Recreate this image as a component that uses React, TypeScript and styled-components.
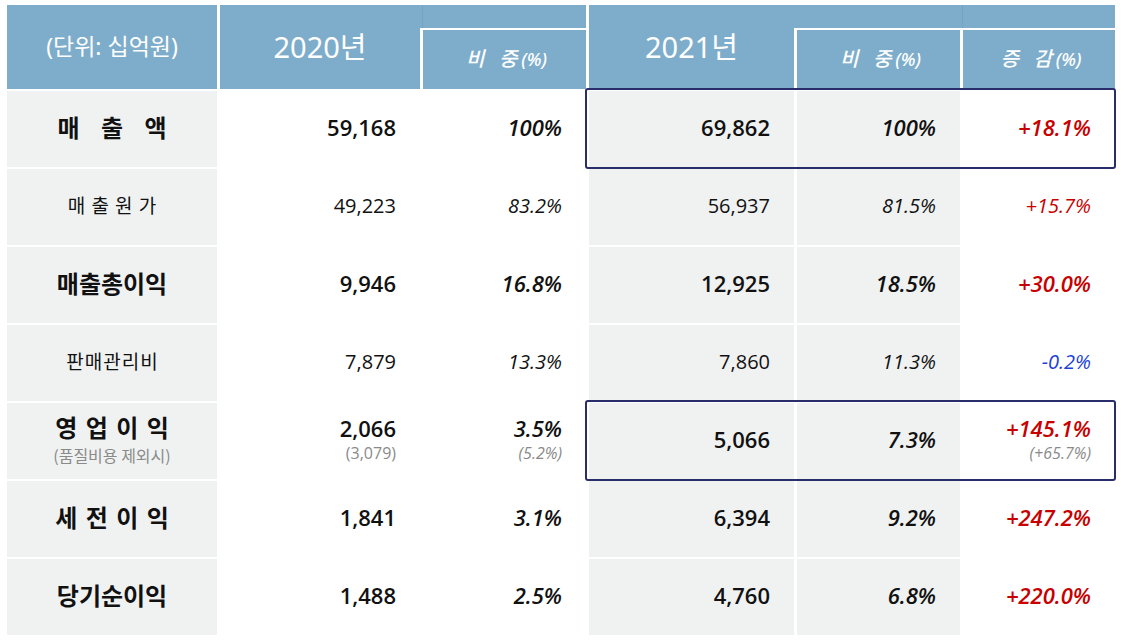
import React from 'react';
import styled, { createGlobalStyle } from 'styled-components';

const Global = createGlobalStyle`
  html, body { margin: 0; padding: 0; background: #ffffff; }
  body { font-family: "Open Sans", "Noto Sans CJK KR", sans-serif; color: #111; }
`;

const Page = styled.div`
  width: 1124px;
  height: 642px;
  padding: 5px 0 0 7px;
  box-sizing: border-box;
  background: #ffffff;
`;

const Table = styled.div`
  display: grid;
  grid-template-columns: 210px 200px 163px 205px 163px 152px;
  grid-template-rows: 23px 59px repeat(7, 76px);
  column-gap: 3px;
  row-gap: 2px;
`;

const BLUE = '#7EADCB';
const GRAY = '#F0F2F1';

const TopStrip = styled.div<{ $col: string; $split: number }>`
  grid-column: ${(p) => p.$col};
  grid-row: 1;
  background:
    linear-gradient(to right, transparent ${(p) => p.$split}px, #73a3c3 ${(p) => p.$split}px, #73a3c3 ${(p) => p.$split + 1}px, transparent ${(p) => p.$split + 1}px),
    ${BLUE};
`;

const HeadCell = styled.div<{ $col: number; $span?: boolean; $size: number }>`
  grid-column: ${(p) => p.$col};
  grid-row: ${(p) => (p.$span ? '1 / 3' : '2')};
  background: ${BLUE};
  color: #ffffff;
  display: flex;
  align-items: center;
  justify-content: center;
  font-family: "Noto Sans", "Noto Sans CJK KR", sans-serif;
  font-size: ${(p) => p.$size}px;
  font-weight: 400;
  padding-bottom: ${(p) => (p.$span ? 5 : 4)}px;
  box-sizing: border-box;
`;

const SubHead = styled.span`
  font-style: italic;
  font-family: "Noto Sans CJK KR", sans-serif;
  font-size: 20px;
  word-spacing: 10px;
  font-weight: 500;
  padding-left: 4px;
`;

const Pct = styled.span`
  font-family: "Noto Sans", sans-serif;
  font-style: italic;
  font-size: 18px;
  font-weight: 500;
  margin-left: 4px;
  word-spacing: 0;
`;

const LabelCell = styled.div<{ $row: number }>`
  grid-column: 1;
  grid-row: ${(p) => p.$row};
  background: ${GRAY};
  display: flex;
  flex-direction: column;
  align-items: center;
  justify-content: center;
  padding-bottom: 3px;
  font-family: "Noto Sans CJK KR", sans-serif;
`;

const LabelText = styled.span<{ $size: number; $weight: number; $ls: number }>`
  font-size: ${(p) => p.$size}px;
  font-weight: ${(p) => p.$weight};
  letter-spacing: ${(p) => p.$ls}px;
  padding-left: ${(p) => p.$ls}px;
  line-height: 1.1;
  color: #111;
`;

const LabelSub = styled.span`
  font-size: 16px;
  color: #8a8a8a;
  line-height: 1.2;
  margin-top: 5px;
  font-weight: 400;
`;

const ValueCell = styled.div<{ $row: number; $col: number; $shade: boolean }>`
  grid-column: ${(p) => p.$col};
  grid-row: ${(p) => p.$row};
  background: ${(p) => (p.$shade ? GRAY : '#ffffff')};
  display: flex;
  flex-direction: column;
  align-items: flex-end;
  justify-content: center;
  padding-right: 24px;
  padding-bottom: 3px;
`;

const Num = styled.span<{ $strong: boolean; $italic?: boolean; $color?: string }>`
  font-family: "Open Sans", sans-serif;
  font-size: ${(p) => (p.$strong ? 22 : 20)}px;
  font-weight: ${(p) => (p.$strong ? 600 : 400)};
  font-style: ${(p) => (p.$italic ? 'italic' : 'normal')};
  color: ${(p) => p.$color || '#111'};
  line-height: 1.1;
`;

const NumSub = styled.span<{ $italic?: boolean }>`
  font-family: "Open Sans", sans-serif;
  font-size: 16px;
  font-weight: 400;
  font-style: ${(p) => (p.$italic ? 'italic' : 'normal')};
  color: #8a8a8a;
  line-height: 1.2;
  margin-top: 4px;
`;

const Highlight = styled.div<{ $row: number }>`
  grid-column: 4 / 7;
  grid-row: ${(p) => p.$row};
  margin: -3px -1px -2px -4px;
  border: 2.5px solid #2a2d6c;
  border-radius: 3px;
  pointer-events: none;
`;

type Row = {
  label: string;
  strong: boolean;
  weight: number;
  size: number;
  ls: number;
  sub?: string;
  v20: string;
  v20s?: string;
  p20: string;
  p20s?: string;
  v21: string;
  p21: string;
  chg: string;
  chgs?: string;
  neg?: boolean;
  box?: boolean;
};

const rows: Row[] = [
  { label: '매 출 액', strong: true, weight: 700, size: 24, ls: 8, v20: '59,168', p20: '100%', v21: '69,862', p21: '100%', chg: '+18.1%', box: true },
  { label: '매 출 원 가', strong: false, weight: 400, size: 19, ls: 1, v20: '49,223', p20: '83.2%', v21: '56,937', p21: '81.5%', chg: '+15.7%' },
  { label: '매출총이익', strong: true, weight: 700, size: 24, ls: 0, v20: '9,946', p20: '16.8%', v21: '12,925', p21: '18.5%', chg: '+30.0%' },
  { label: '판매관리비', strong: false, weight: 400, size: 19, ls: 1, v20: '7,879', p20: '13.3%', v21: '7,860', p21: '11.3%', chg: '-0.2%', neg: true },
  { label: '영 업 이 익', strong: true, weight: 700, size: 24, ls: 1.5, sub: '(품질비용 제외시)', v20: '2,066', v20s: '(3,079)', p20: '3.5%', p20s: '(5.2%)', v21: '5,066', p21: '7.3%', chg: '+145.1%', chgs: '(+65.7%)', box: true },
  { label: '세 전 이 익', strong: true, weight: 700, size: 24, ls: 1.5, v20: '1,841', p20: '3.1%', v21: '6,394', p21: '9.2%', chg: '+247.2%' },
  { label: '당기순이익', strong: true, weight: 700, size: 24, ls: 0, v20: '1,488', p20: '2.5%', v21: '4,760', p21: '6.8%', chg: '+220.0%' },
];

export default function App() {
  return (
    <Page>
      <Global />
      <Table>
        <TopStrip $col="2 / 4" $split={202} />
        <TopStrip $col="4 / 7" $split={373} />
        <HeadCell $col={1} $span $size={23}>(단위: 십억원)</HeadCell>
        <HeadCell $col={2} $span $size={29}>2020년</HeadCell>
        <HeadCell $col={3} $size={20}>
          <SubHead>비 중<Pct>(%)</Pct></SubHead>
        </HeadCell>
        <HeadCell $col={4} $span $size={29}>2021년</HeadCell>
        <HeadCell $col={5} $size={20}>
          <SubHead>비 중<Pct>(%)</Pct></SubHead>
        </HeadCell>
        <HeadCell $col={6} $size={20}>
          <SubHead>증 감<Pct>(%)</Pct></SubHead>
        </HeadCell>

        {rows.map((r, i) => {
          const row = i + 3;
          return (
            <React.Fragment key={r.label}>
              <LabelCell $row={row}>
                <LabelText $size={r.size} $weight={r.weight} $ls={r.ls}>{r.label}</LabelText>
                {r.sub && <LabelSub>{r.sub}</LabelSub>}
              </LabelCell>
              <ValueCell $row={row} $col={2} $shade={false}>
                <Num $strong={r.strong}>{r.v20}</Num>
                {r.v20s && <NumSub>{r.v20s}</NumSub>}
              </ValueCell>
              <ValueCell $row={row} $col={3} $shade={false}>
                <Num $strong={r.strong} $italic>{r.p20}</Num>
                {r.p20s && <NumSub $italic>{r.p20s}</NumSub>}
              </ValueCell>
              <ValueCell $row={row} $col={4} $shade>
                <Num $strong={r.strong}>{r.v21}</Num>
              </ValueCell>
              <ValueCell $row={row} $col={5} $shade>
                <Num $strong={r.strong} $italic>{r.p21}</Num>
              </ValueCell>
              <ValueCell $row={row} $col={6} $shade={false}>
                <Num $strong={r.strong} $italic $color={r.neg ? '#1c3fd8' : '#c80000'}>{r.chg}</Num>
                {r.chgs && <NumSub $italic>{r.chgs}</NumSub>}
              </ValueCell>
              {r.box && <Highlight $row={row} />}
            </React.Fragment>
          );
        })}
      </Table>
    </Page>
  );
}
